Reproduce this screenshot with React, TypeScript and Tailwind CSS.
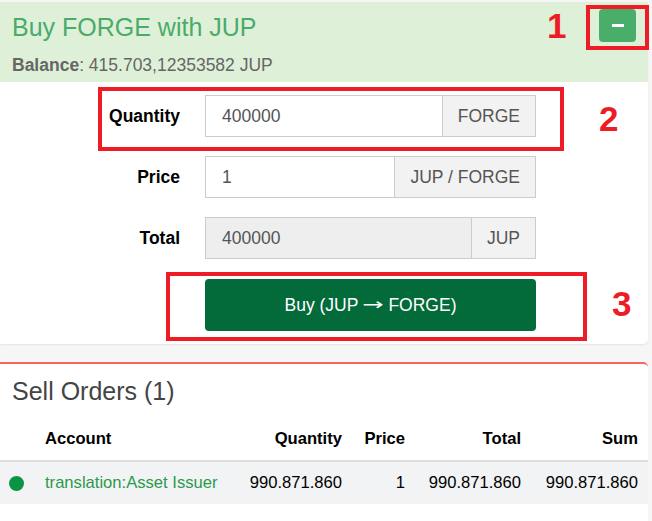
import React from "react";

const font = "font-['Liberation_Sans',Arial,sans-serif]";

function Row({
  label,
  value,
  addon,
  disabled,
}: {
  label: string;
  value: string;
  addon: string;
  disabled?: boolean;
}) {
  return (
    <div className="flex items-center">
      <div className="w-[180px] text-right font-bold text-[17.5px] text-black">{label}</div>
      <div className="ml-[25px] flex h-[42px] w-[331px]">
        <div
          className={`flex flex-1 items-center border border-[#cccccc] pl-[16px] text-[17.5px] text-[#555555] ${
            disabled ? "bg-[#eeeeee]" : "bg-white"
          }`}
        >
          {value}
        </div>
        <div className="flex items-center border border-l-0 border-[#cccccc] bg-[#f2f2f2] px-[15px] text-[17.5px] text-[#555555]">
          {addon}
        </div>
      </div>
    </div>
  );
}

export default function App() {
  return (
    <div className={`relative h-[521px] w-[652px] overflow-hidden bg-[#f6f6f6] pt-[2px] ${font}`}>
      {/* Buy panel */}
      <div className="w-[648px] overflow-hidden rounded-br-[5px] bg-white shadow-[0_1px_2px_rgba(0,0,0,0.08)]">
        <div className="flex h-[80px] items-start justify-between bg-[#dff0d8] pl-[12px] pr-[12px] pt-[10px]">
          <div>
            <div className="text-[25px] leading-[30px] text-[#4aab6b]">Buy FORGE with JUP</div>
            <div className="mt-[11px] text-[17.5px] leading-[24px] text-[#666666]">
              <span className="font-bold">Balance</span>: 415.703,12353582 JUP
            </div>
          </div>
          <div className="-mt-[3px] flex h-[33px] w-[37px] items-center justify-center rounded-[4px] bg-[#4aae6b]">
            <div className="h-[3px] w-[12px] bg-white" />
          </div>
        </div>
        <div className="flex flex-col gap-[19px] pb-[13px] pt-[13px]">
          <Row label="Quantity" value="400000" addon="FORGE" />
          <Row label="Price" value="1" addon="JUP / FORGE" />
          <Row label="Total" value="400000" addon="JUP" disabled />
          <div className="ml-[205px] mt-[1px] flex h-[52px] w-[331px] items-center justify-center rounded-[4px] bg-[#036a3a] text-[17.5px] text-white">
            Buy (JUP
            <span className="mx-[5px] inline-block w-[20px] scale-x-[1.6] text-center font-['DejaVu_Sans',sans-serif] text-[16px]">
              →
            </span>
            FORGE)
          </div>
        </div>
      </div>

      {/* Sell orders panel */}
      <div className="mt-[18px] w-[648px] rounded-tr-[5px] border-t-2 border-[#f4675a] bg-white pb-[40px]">
        <div className="pl-[12px] pt-[12px] text-[25px] leading-[30px] text-[#444444]">Sell Orders (1)</div>
        <div className="mt-[13px] grid grid-cols-[37px_203px_110px_63px_116px_119px] text-[16.6px] text-black">
          <div className="h-[43px] border-b-2 border-[#dddddd]" />
          <div className="flex h-[43px] items-center border-b-2 border-[#dddddd] pl-2 font-bold">Account</div>
          <div className="flex h-[43px] items-center justify-end border-b-2 border-[#dddddd] pr-2 font-bold">Quantity</div>
          <div className="flex h-[43px] items-center justify-end border-b-2 border-[#dddddd] pr-2 font-bold">Price</div>
          <div className="flex h-[43px] items-center justify-end border-b-2 border-[#dddddd] pr-2 font-bold">Total</div>
          <div className="flex h-[43px] items-center justify-end border-b-2 border-[#dddddd] pr-[10px] font-bold">Sum</div>

          <div className="flex h-[42px] items-center bg-[#f2f3f4] pl-[9px]">
            <div className="h-[15px] w-[15px] rounded-full bg-[#0b9444]" />
          </div>
          <div className="flex h-[42px] items-center bg-[#f2f3f4] pl-2 text-[#2a9a4c]">translation:Asset Issuer</div>
          <div className="flex h-[42px] items-center justify-end bg-[#f2f3f4] pr-2">990.871.860</div>
          <div className="flex h-[42px] items-center justify-end bg-[#f2f3f4] pr-2">1</div>
          <div className="flex h-[42px] items-center justify-end bg-[#f2f3f4] pr-2">990.871.860</div>
          <div className="flex h-[42px] items-center justify-end bg-[#f2f3f4] pr-[10px]">990.871.860</div>
        </div>
      </div>

      {/* Annotations */}
      <div className="pointer-events-none absolute left-[586px] top-[5px] h-[45px] w-[63px] border-[4px] border-[#ee1c25]" />
      <div className="pointer-events-none absolute left-[98px] top-[87px] h-[64px] w-[466px] border-[4px] border-[#ee1c25]" />
      <div className="pointer-events-none absolute left-[166px] top-[272px] h-[69px] w-[421px] border-[4px] border-[#ee1c25]" />
      <div className="absolute left-[547px] top-[8px] text-[35px] font-bold leading-[36px] text-[#ee1c25]">1</div>
      <div className="absolute left-[599px] top-[101px] text-[35px] font-bold leading-[36px] text-[#ee1c25]">2</div>
      <div className="absolute left-[612px] top-[286px] text-[35px] font-bold leading-[36px] text-[#ee1c25]">3</div>
    </div>
  );
}
